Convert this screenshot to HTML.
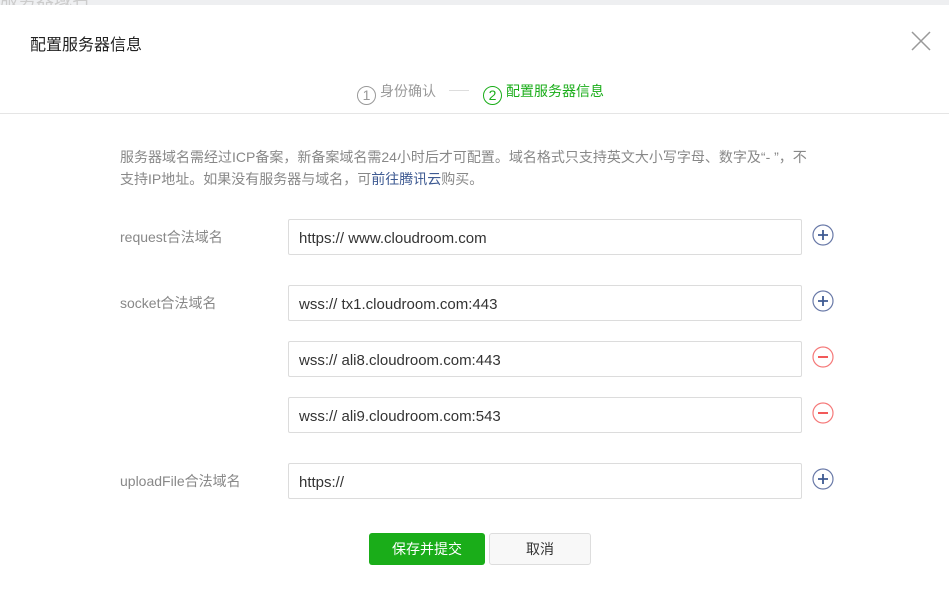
<!DOCTYPE html>
<html><head><meta charset="utf-8"><style>
*{margin:0;padding:0;box-sizing:border-box}
body{width:949px;height:589px;overflow:hidden;background:#fff;font-family:"Liberation Sans","Noto Sans CJK SC",sans-serif;position:relative}
.top{position:absolute;left:0;top:0;width:949px;height:5px;background:#eeeff1;overflow:hidden}
.top span{position:absolute;left:0;top:-14px;font-size:18px;color:#ccc}
.abs{position:absolute;white-space:nowrap}
.title{left:30px;top:31px;font-size:16px;color:#222}
.hr{position:absolute;left:0;top:113px;width:949px;height:1px;background:#e5e5e5}
.circ{display:inline-block;width:19px;height:19px;border:1px solid #999;border-radius:50%;font-size:14px;line-height:17px;text-align:center;vertical-align:-4px;margin-right:4px}
.lbl{font-size:14px;color:#888;left:120px}
.inp{position:absolute;left:288px;width:514px;height:36px;border:1px solid #dcdcdc;border-radius:2px;font-size:15px;color:#333;padding-left:10px;line-height:37px}
.ic{position:absolute;left:812px;width:22px;height:22px}
</style></head><body>
<div class="top"><span>服务器域名</span></div>
<div class="abs title">配置服务器信息</div>
<svg class="abs" style="left:911px;top:31px" width="20" height="20"><path d="M1 1L19 19M19 1L1 19" stroke="#999" stroke-width="1.5"/></svg>
<div class="abs" style="left:357px;top:81px;font-size:14px;color:#999"><span class="circ">1</span>身份确认</div>
<div class="abs" style="left:449px;top:90px;width:20px;height:1px;background:#ddd"></div>
<div class="abs" style="left:483px;top:81px;font-size:14px;color:#1aad19"><span class="circ" style="border-color:#1aad19">2</span>配置服务器信息</div>
<div class="hr"></div>
<div class="abs" style="left:120px;top:146px;font-size:14px;line-height:22px;color:#888">服务器域名需经过ICP备案，新备案域名需24小时后才可配置。域名格式只支持英文大小写字母、数字及“- ”，不<br>支持IP地址。如果没有服务器与域名，可<span style="color:#3e5a92">前往腾讯云</span>购买。</div>
<div class="abs lbl" style="top:227px">request合法域名</div>
<div class="abs lbl" style="top:293px">socket合法域名</div>
<div class="abs lbl" style="top:471px">uploadFile合法域名</div>
<div class="inp" style="top:219px">https:// www.cloudroom.com</div>
<div class="inp" style="top:285px">wss:// tx1.cloudroom.com:443</div>
<div class="inp" style="top:341px">wss:// ali8.cloudroom.com:443</div>
<div class="inp" style="top:397px">wss:// ali9.cloudroom.com:543</div>
<div class="inp" style="top:463px">https://</div>
<svg class="ic" style="top:224px" viewBox="0 0 22 22"><circle cx="11" cy="11" r="10" fill="none" stroke="#6a7aa8" stroke-width="1.2"/><path d="M6 11H16M11 6V16" stroke="#3e5a92" stroke-width="1.8"/></svg>
<svg class="ic" style="top:290px" viewBox="0 0 22 22"><circle cx="11" cy="11" r="10" fill="none" stroke="#6a7aa8" stroke-width="1.2"/><path d="M6 11H16M11 6V16" stroke="#3e5a92" stroke-width="1.8"/></svg>
<svg class="ic" style="top:346px" viewBox="0 0 22 22"><circle cx="11" cy="11" r="10" fill="none" stroke="#f57a7a" stroke-width="1.2"/><path d="M6 11H16" stroke="#f04848" stroke-width="1.8"/></svg>
<svg class="ic" style="top:402px" viewBox="0 0 22 22"><circle cx="11" cy="11" r="10" fill="none" stroke="#f57a7a" stroke-width="1.2"/><path d="M6 11H16" stroke="#f04848" stroke-width="1.8"/></svg>
<svg class="ic" style="top:468px" viewBox="0 0 22 22"><circle cx="11" cy="11" r="10" fill="none" stroke="#6a7aa8" stroke-width="1.2"/><path d="M6 11H16M11 6V16" stroke="#3e5a92" stroke-width="1.8"/></svg>
<div class="abs" style="left:369px;top:533px;width:116px;height:32px;background:#1aad19;border-radius:3px;color:#fff;font-size:14px;text-align:center;line-height:32px">保存并提交</div>
<div class="abs" style="left:489px;top:533px;width:102px;height:32px;background:#f8f8f8;border:1px solid #ddd;border-radius:3px;color:#333;font-size:14px;text-align:center;line-height:30px">取消</div>
</body></html>
